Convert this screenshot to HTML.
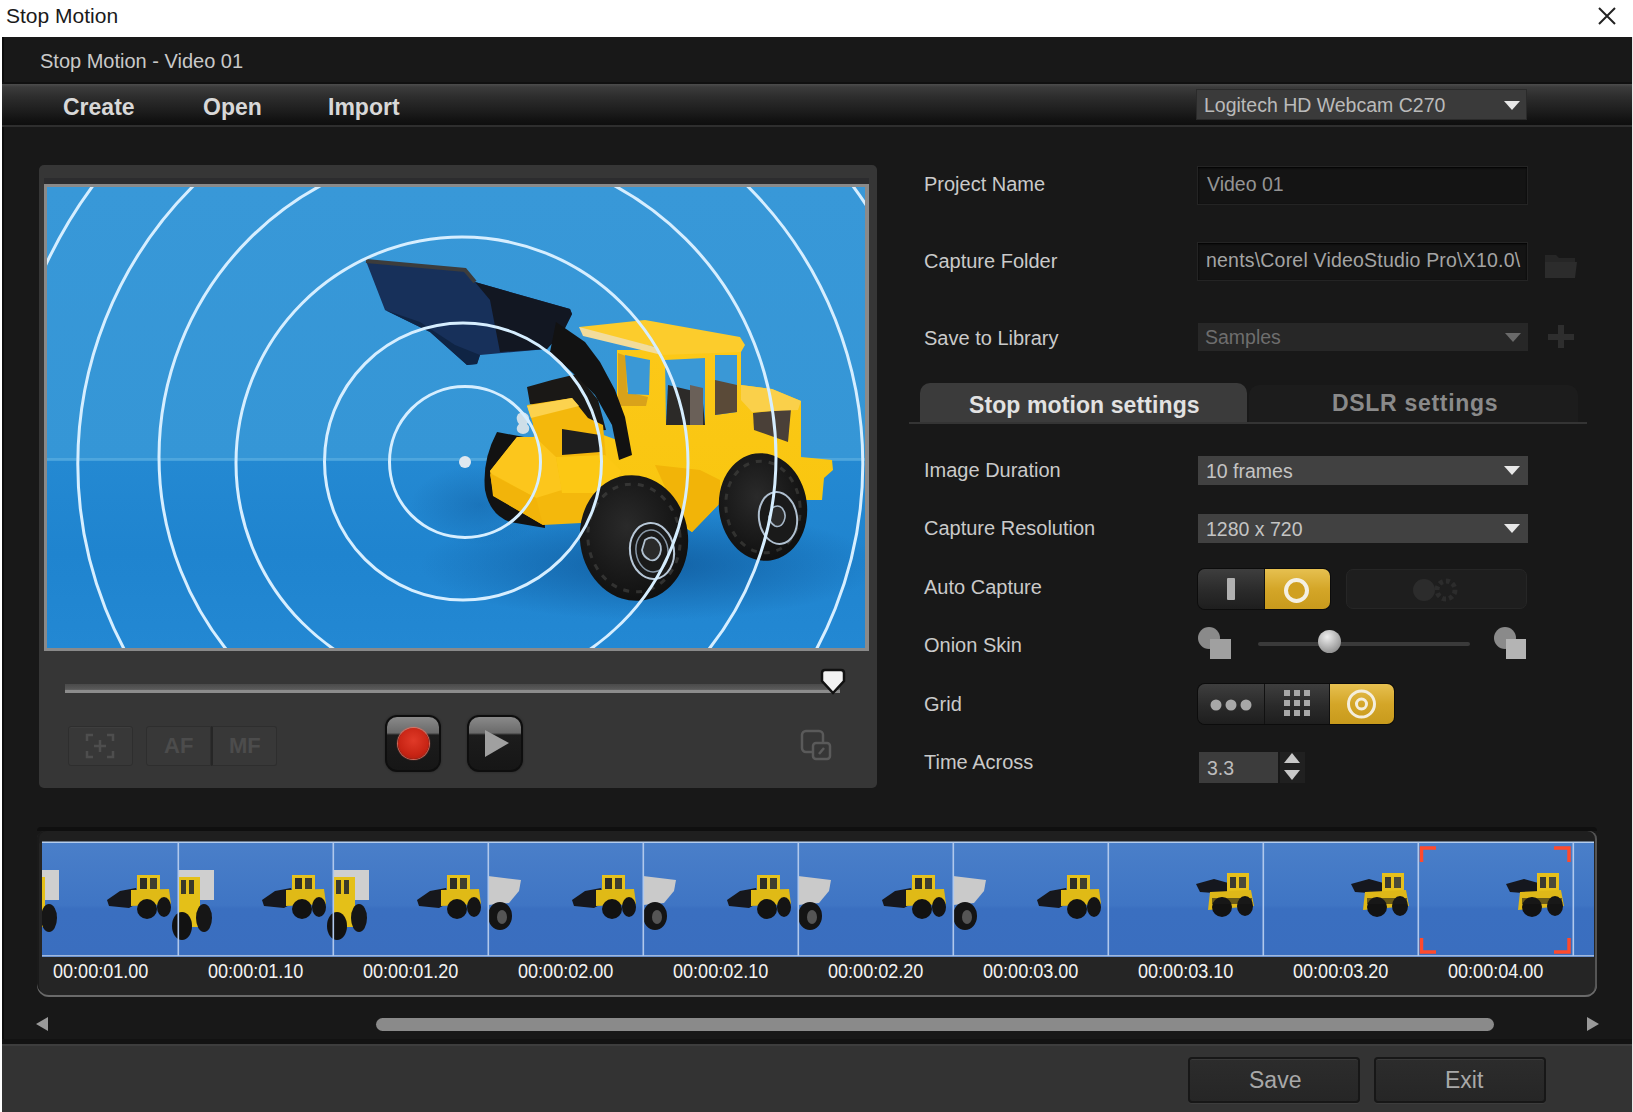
<!DOCTYPE html>
<html><head><meta charset="utf-8">
<style>
*{margin:0;padding:0;box-sizing:border-box}
html,body{width:1633px;height:1112px;overflow:hidden;background:#fff;font-family:"Liberation Sans",sans-serif}
.a{position:absolute}
.t{position:absolute;white-space:nowrap;line-height:1}
#win{left:2px;top:37px;width:1630px;height:1075px;background:#181818;border-left:2px solid #0c0c0c}
.lbl{position:absolute;left:924px;font-size:20px;color:#cacaca;white-space:nowrap;line-height:1}
.dd{position:absolute;left:1198px;width:330px;height:29px;background:#414141}
.dd .v{position:absolute;left:8px;top:6px;font-size:19.5px;color:#c4c4c4;white-space:nowrap;line-height:1}
.ts{position:absolute;top:960px;font-size:21px;color:#f2f2f2;white-space:nowrap;line-height:1;transform:scaleX(0.86);transform-origin:0 0}
.arr{position:absolute;width:0;height:0;border-left:8px solid transparent;border-right:8px solid transparent;border-top:9px solid #e8e8e8}
</style></head>
<body>
<!-- title bar -->
<div class="t" style="left:6px;top:5px;font-size:21px;color:#1a1a1a">Stop Motion</div>
<svg class="a" style="left:1596px;top:6px" width="22" height="20"><path d="M3 2 L19 18 M19 2 L3 18" stroke="#222" stroke-width="2"/></svg>


<div id="win" class="a"></div>
<div class="t" style="left:40px;top:51px;font-size:20px;color:#c9c9c9">Stop Motion - Video 01</div>
<!-- menu bar -->
<div class="a" style="left:2px;top:82px;width:1630px;height:2px;background:#101010"></div>
<div class="a" style="left:2px;top:84px;width:1630px;height:41px;background:linear-gradient(#4c4c4c 0,#3c3c3c 3px,#2e2e2e 12px,#1c1c1c 28px,#121212 36px,#0e0e0e 41px)"></div>
<div class="a" style="left:2px;top:125px;width:1630px;height:2px;background:#2e2e2e"></div>
<div class="t" style="left:63px;top:96px;font-size:23px;font-weight:700;color:#d8d8d8">Create</div>
<div class="t" style="left:203px;top:96px;font-size:23px;font-weight:700;color:#d8d8d8">Open</div>
<div class="t" style="left:328px;top:96px;font-size:23px;font-weight:700;color:#d8d8d8">Import</div>
<div class="a" style="left:1196px;top:89px;width:331px;height:31px;background:#3a3a3a;border:1px solid #2a2a2a"></div>
<div class="t" style="left:1204px;top:96px;font-size:19.5px;color:#bababa">Logitech HD Webcam C270</div>
<div class="arr" style="left:1504px;top:101px"></div>

<!-- preview panel -->
<div class="a" style="left:39px;top:165px;width:838px;height:623px;background:#363636;border-radius:5px"></div>
<div class="a" style="left:44px;top:178px;width:825px;height:6px;background:#2c2c2e"></div>
<div class="a" style="left:44px;top:184px;width:825px;height:467px;background:#8a8a8a"></div>
<svg class="a" style="left:47px;top:187px" width="818" height="461" viewBox="47 187 818 461">
<defs>
<linearGradient id="sky" x1="0" y1="0" x2="0" y2="1"><stop offset="0" stop-color="#3898d8"/><stop offset="1" stop-color="#3596d6"/></linearGradient>
<linearGradient id="gnd" x1="0" y1="0" x2="0" y2="1"><stop offset="0" stop-color="#2489d2"/><stop offset="0.5" stop-color="#1f84cf"/><stop offset="1" stop-color="#2388d3"/></linearGradient>
<radialGradient id="shadow" cx="0.5" cy="0.5" r="0.5"><stop offset="0" stop-color="#0a4a88" stop-opacity="0.6"/><stop offset="1" stop-color="#0a4a88" stop-opacity="0"/></radialGradient>
<linearGradient id="bodyY" x1="0" y1="0" x2="0" y2="1"><stop offset="0" stop-color="#fcc818"/><stop offset="1" stop-color="#f8c60e"/></linearGradient>
<radialGradient id="tire" cx="0.45" cy="0.4" r="0.6"><stop offset="0" stop-color="#2a2a2a"/><stop offset="1" stop-color="#101010"/></radialGradient>
</defs>
<rect x="47" y="187" width="818" height="275" fill="url(#sky)"/>
<rect x="47" y="460" width="818" height="188" fill="url(#gnd)"/>
<rect x="47" y="458" width="818" height="3" fill="#63b4e4" opacity="0.55"/>
<ellipse cx="650" cy="565" rx="230" ry="55" fill="url(#shadow)"/>
<ellipse cx="480" cy="505" rx="70" ry="40" fill="url(#shadow)" opacity="0.5"/>
<!-- rear-left tire behind counterweight -->
<path d="M497 432 Q482 460 485 490 Q490 515 510 522 L545 528 L540 440 Z" fill="#121212"/>
<!-- lower link -->
<polygon points="527,387 552,380 577,374 598,400 606,430 578,432 562,410 530,404" fill="#1a1816"/>
<!-- bucket -->
<polygon points="366,261 465,270 475,282 570,309 572,314 564,330 547,349 480,355 477,364 467,365 430,332 385,310" fill="#17305a"/>
<polygon points="475,282 570,309 572,314 564,330 547,349 500,352 490,300" fill="#121722"/>
<polyline points="366,261 465,270 475,282" stroke="#3c3c3c" stroke-width="4" fill="none"/>
<polygon points="385,310 430,332 467,365 477,364 480,355 455,345 420,322" fill="#0f2444"/>
<!-- cab body -->
<polygon points="617,350 741,350 741,385 772,389 801,401 801,457 832,460 833,470 824,478 822,500 790,500 740,500 720,503 692,532 640,500 600,470 590,430 617,440" fill="url(#bodyY)"/>
<polygon points="655,465 700,470 720,480 720,503 692,532 680,520" fill="#f2b408"/>
<!-- window 1 -->
<polygon points="618,353 626,356 627,392 648,397 646,406 618,406" fill="#d9a21a"/>
<polygon points="625,355 650,360 649,395 628,394" fill="#3a98d6"/>
<!-- window 2 -->
<polygon points="665,360 705,358 705,425 666,425" fill="#3a98d6"/>
<polygon points="668,385 702,393 705,425 666,425" fill="#2c2a28"/>
<polygon points="690,385 703,388 703,425 690,425" fill="#6a6058"/>
<!-- window 3 -->
<polygon points="715,355 737,355 737,412 715,415" fill="#3a98d6"/>
<polygon points="715,380 737,385 737,412 715,415" fill="#5a4a38"/>
<!-- grille -->
<polygon points="753,413 791,409 788,442 754,430" fill="#4a4038"/>
<!-- hood top -->
<polygon points="741,385 772,389 801,401 798,410 752,412 741,400" fill="#fad04a"/>
<!-- roof -->
<polygon points="579,327 645,320 740,337 745,345 741,352 662,355 655,347 585,332" fill="#fccc2c"/>
<polygon points="579,327 655,347 662,355 583,336" fill="#f2dc9c"/>
<!-- boom -->
<polygon points="556,322 585,342 600,362 615,390 625,417 632,455 619,460 612,425 595,395 575,375 550,352" fill="#121212"/>
<!-- front block -->
<polygon points="527,405 572,398 588,418 603,425 606,458 622,471 610,493 600,522 543,525 493,496 490,471 517,437 534,437 533,424" fill="#f4b80c"/>
<polygon points="527,406 572,398 579,406 531,418" fill="#fcd24e"/>
<polygon points="490,471 517,437 535,437 556,457 562,490 536,498 492,474" fill="#fcc61c"/>
<polygon points="490,474 536,498 543,525 494,496" fill="#f2b40a"/>
<polygon points="556,457 605,455 622,471 610,493 562,493" fill="#fcc814"/>
<polygon points="562,429 600,435 600,452 562,455" fill="#1e1e1e"/>
<path d="M518 414 q6 -4 10 1 q3 5 -1 9 q4 3 1 8 q-5 4 -10 0 q-3 -4 1 -8 q-4 -5 -1 -10 z" fill="#dfe6ea" opacity="0.9"/>
<!-- front tire -->
<ellipse cx="634" cy="538" rx="54" ry="63" transform="rotate(-8 634 538)" fill="url(#tire)"/>
<ellipse cx="634" cy="538" rx="46" ry="54" transform="rotate(-8 634 538)" fill="none" stroke="#4a4a48" stroke-width="3" stroke-dasharray="6 7" opacity="0.55"/>
<ellipse cx="652" cy="551" rx="22" ry="28" transform="rotate(-8 652 551)" fill="#1a1a1a" stroke="#b8c8d8" stroke-width="2"/>
<ellipse cx="652" cy="551" rx="16" ry="21" transform="rotate(-8 652 551)" fill="none" stroke="#8898a8" stroke-width="1.5"/>
<path d="M645 540 q7 -5 12 0 q6 6 3 14 q-4 8 -10 6 q-7 -3 -8 -10 z" fill="#2a2a2a" stroke="#b0c0d0" stroke-width="1.8"/>
<!-- rear tire -->
<ellipse cx="763" cy="507" rx="44" ry="54" transform="rotate(-8 763 507)" fill="url(#tire)"/>
<ellipse cx="763" cy="507" rx="37" ry="46" transform="rotate(-8 763 507)" fill="none" stroke="#484846" stroke-width="3" stroke-dasharray="6 7" opacity="0.55"/>

<ellipse cx="778" cy="518" rx="19" ry="26" transform="rotate(-8 778 518)" fill="#1a1a1a" stroke="#b0c0d0" stroke-width="2"/>
<path d="M772 508 q6 -4 10 0 q5 6 2 13 q-3 7 -9 5 q-5 -3 -6 -9 z" fill="#2a2a2a" stroke="#a8b8c8" stroke-width="1.6"/>
<!-- rings -->
<g fill="none" stroke="#d6eeff" stroke-width="3">
<circle cx="465" cy="462" r="75.5"/>
<circle cx="463" cy="461.5" r="138.5"/>
<circle cx="462" cy="463" r="226"/>
<circle cx="467.5" cy="457" r="308.5"/>
<circle cx="470.3" cy="464" r="392.5"/>
<circle cx="472.8" cy="466" r="472"/>
</g>
<circle cx="465" cy="462" r="6" fill="#dfe8f0"/>
</svg>



<!-- right panel -->
<div class="lbl" style="top:174px">Project Name</div>
<div class="lbl" style="top:251px">Capture Folder</div>
<div class="lbl" style="top:328px">Save to Library</div>
<div class="a" style="left:1197px;top:166px;width:331px;height:39px;background:#141414;border:1px solid #242424;box-shadow:inset 0 1px 2px #000"></div>
<div class="t" style="left:1207px;top:175px;font-size:19.5px;color:#949494">Video 01</div>
<div class="a" style="left:1197px;top:242px;width:331px;height:39px;background:#141414;border:1px solid #242424;box-shadow:inset 0 1px 2px #000"></div>
<div class="t" style="left:1206px;top:251px;font-size:19.5px;color:#a4a4a4;letter-spacing:0.2px">nents\Corel VideoStudio Pro\X10.0\</div>
<svg class="a" style="left:1543px;top:250px" width="36" height="32"><path d="M2 5 h11 l3 3 h16 v20 h-30 z" fill="#262626"/><path d="M2 12 h32 l-2 16 h-30 z" fill="#2c2c2c"/></svg>
<div class="a" style="left:1198px;top:323px;width:330px;height:28px;background:#272727"></div>
<div class="t" style="left:1205px;top:328px;font-size:19.5px;color:#6e6e6e">Samples</div>
<div class="arr" style="left:1505px;top:333px;border-top-color:#6a6a6a"></div>
<svg class="a" style="left:1547px;top:324px" width="28" height="25"><path d="M11 1 h6 v9 h10 v6 h-10 v8 h-6 v-8 h-10 v-6 h10 z" fill="#2e2e2e"/></svg>

<!-- tabs -->
<div class="a" style="left:920px;top:383px;width:327px;height:40px;background:#3b3b3b;border-radius:10px 10px 0 0"></div>
<div class="a" style="left:1249px;top:385px;width:329px;height:38px;background:#1c1c1c;border-radius:10px 10px 0 0"></div>
<div class="a" style="left:909px;top:422px;width:678px;height:2px;background:#343434"></div>
<div class="t" style="left:969px;top:394px;font-size:23px;font-weight:700;color:#e2e2e2;letter-spacing:0.1px">Stop motion settings</div>
<div class="t" style="left:1332px;top:392px;font-size:23px;font-weight:700;color:#8a8a8a;letter-spacing:0.7px">DSLR settings</div>

<div class="lbl" style="top:460px">Image Duration</div>
<div class="lbl" style="top:518px">Capture Resolution</div>
<div class="lbl" style="top:577px">Auto Capture</div>
<div class="lbl" style="top:635px">Onion Skin</div>
<div class="lbl" style="top:694px">Grid</div>
<div class="lbl" style="top:752px">Time Across</div>

<div class="dd" style="top:456px"><div class="v">10 frames</div><div class="arr" style="left:306px;top:10px"></div></div>
<div class="dd" style="top:514px"><div class="v">1280 x 720</div><div class="arr" style="left:306px;top:10px"></div></div>

<!-- auto capture -->
<div class="a" style="left:1198px;top:569px;width:132px;height:40px;border-radius:7px;overflow:hidden;box-shadow:0 0 0 1px #0c0c0c">
  <div class="a" style="left:0;top:0;width:66px;height:40px;background:linear-gradient(#3e3e3e,#2a2a2a 55%,#1e1e1e)"></div>
  <div class="a" style="left:66px;top:0;width:1px;height:40px;background:#111"></div>
  <div class="a" style="left:67px;top:0;width:65px;height:40px;background:linear-gradient(#e6c050,#d4a628 50%,#c89a1c)"></div>
  <div class="a" style="left:29px;top:9px;width:8px;height:22px;background:#b0b0b0;border-radius:1px"></div>
  <div class="a" style="left:86px;top:9px;width:25px;height:25px;border-radius:50%;border:4px solid #f4f0e4;background:#d0a020"></div>
</div>
<div class="a" style="left:1346px;top:569px;width:181px;height:40px;border-radius:7px;background:#1e1e1e;border:1px solid #262626"></div>
<svg class="a" style="left:1410px;top:576px" width="52" height="28"><circle cx="14" cy="14" r="11" fill="#2c2c2c"/><circle cx="36" cy="14" r="9" fill="none" stroke="#2c2c2c" stroke-width="5" stroke-dasharray="4 3"/></svg>

<!-- onion skin -->
<div class="a" style="left:1258px;top:642px;width:212px;height:4px;border-radius:2px;background:#3a3a3a"></div>
<div class="a" style="left:1318px;top:630px;width:23px;height:23px;border-radius:50%;background:radial-gradient(circle at 40% 30%,#eee,#9a9a9a 70%,#777)"></div>
<svg class="a" style="left:1196px;top:625px" width="40" height="38"><circle cx="13" cy="13" r="11" fill="#8a8a8a"/><rect x="14" y="14" width="21" height="20" fill="#a0a0a0"/></svg>
<svg class="a" style="left:1492px;top:625px" width="40" height="38"><circle cx="13" cy="13" r="11" fill="#8a8a8a"/><rect x="14" y="14" width="20" height="20" fill="#b4b4b4"/></svg>

<!-- grid -->
<div class="a" style="left:1198px;top:684px;width:196px;height:40px;border-radius:7px;overflow:hidden;box-shadow:0 0 0 1px #0c0c0c">
  <div class="a" style="left:0;top:0;width:66px;height:40px;background:linear-gradient(#3e3e3e,#2a2a2a 55%,#1e1e1e)"></div>
  <div class="a" style="left:66px;top:0;width:1px;height:40px;background:#111"></div>
  <div class="a" style="left:67px;top:0;width:64px;height:40px;background:linear-gradient(#3e3e3e,#2a2a2a 55%,#1e1e1e)"></div>
  <div class="a" style="left:131px;top:0;width:1px;height:40px;background:#111"></div>
  <div class="a" style="left:132px;top:0;width:64px;height:40px;background:linear-gradient(#e6c050,#d4a628 50%,#c89a1c)"></div>
  <svg class="a" style="left:0;top:0" width="196" height="40">
    <circle cx="18" cy="21" r="5.5" fill="#a8a8a8"/><circle cx="33" cy="21" r="5.5" fill="#a8a8a8"/><circle cx="48" cy="21" r="5.5" fill="#a8a8a8"/>
    <g fill="#a8a8a8"><rect x="86" y="6" width="6" height="6"/><rect x="96" y="6" width="6" height="6"/><rect x="106" y="6" width="6" height="6"/>
    <rect x="86" y="16" width="6" height="6"/><rect x="96" y="16" width="6" height="6"/><rect x="106" y="16" width="6" height="6"/>
    <rect x="86" y="26" width="6" height="6"/><rect x="96" y="26" width="6" height="6"/><rect x="106" y="26" width="6" height="6"/></g>
    <circle cx="163.5" cy="20" r="13" fill="none" stroke="#f4eedc" stroke-width="3"/><circle cx="163.5" cy="20" r="5" fill="none" stroke="#f4eedc" stroke-width="3"/>
  </svg>
</div>

<!-- time across -->
<div class="a" style="left:1199px;top:752px;width:79px;height:31px;background:#3c3c3c"></div>
<div class="t" style="left:1207px;top:759px;font-size:19.5px;color:#bcbcbc">3.3</div>
<div class="a" style="left:1280px;top:752px;width:25px;height:31px;background:#202020"></div>
<div class="a" style="left:1284px;top:753px;width:0;height:0;border-left:8px solid transparent;border-right:8px solid transparent;border-bottom:10px solid #c8c8c8"></div>
<div class="a" style="left:1284px;top:770px;width:0;height:0;border-left:8px solid transparent;border-right:8px solid transparent;border-top:10px solid #c8c8c8"></div>

<!-- preview controls -->
<div class="a" style="left:65px;top:684px;width:775px;height:9px;background:linear-gradient(#4a4a4a,#5a5a5a 60%,#8c8c8c 70%,#8c8c8c)"></div>
<svg class="a" style="left:818px;top:668px" width="30" height="28"><path d="M4 5 Q4 2 7 2 H23 Q26 2 26 5 V13 L15 25 L4 13 Z" fill="#f2f2f2" stroke="#111" stroke-width="2.5"/></svg>
<div class="a" style="left:68px;top:726px;width:65px;height:40px;background:#383838;border:1px solid #2e2e2e;border-radius:3px;box-shadow:inset 0 1px 0 #3e3e3e"></div>
<svg class="a" style="left:84px;top:731px" width="32" height="30"><g fill="none" stroke="#4e4e4e" stroke-width="2.5"><path d="M3 10 V4 H9 M23 4 H29 V10 M29 20 V26 H23 M9 26 H3 V20"/><path d="M16 9 V21 M10 15 H22"/></g></svg>
<div class="a" style="left:146px;top:726px;width:65px;height:40px;background:#383838;border:1px solid #2e2e2e;border-radius:3px 0 0 3px"></div>
<div class="a" style="left:211px;top:726px;width:66px;height:40px;background:#383838;border:1px solid #2e2e2e;border-left:2px solid #262626;border-radius:0 3px 3px 0"></div>
<div class="t" style="left:164px;top:735px;font-size:22px;font-weight:700;color:#4c4c4c">AF</div>
<div class="t" style="left:229px;top:735px;font-size:22px;font-weight:700;color:#4c4c4c">MF</div>
<!-- record -->
<div class="a" style="left:385px;top:715px;width:56px;height:57px;border-radius:12px;background:linear-gradient(#8a8a8a 0,#6a6a6a 30%,#1c1c1c 34%,#161616 100%);border:2px solid #0e0e0e;box-shadow:0 0 2px #222"></div>
<div class="a" style="left:398px;top:728px;width:31px;height:31px;border-radius:50%;background:radial-gradient(circle at 50% 40%,#e03a28,#c82414 60%,#a01a0e);box-shadow:0 0 1px 1px #e67060"></div>
<!-- play -->
<div class="a" style="left:467px;top:715px;width:56px;height:57px;border-radius:12px;background:linear-gradient(#8a8a8a 0,#6a6a6a 30%,#1c1c1c 34%,#161616 100%);border:2px solid #0e0e0e;box-shadow:0 0 2px #222"></div>
<svg class="a" style="left:482px;top:728px" width="30" height="32"><path d="M3 2 L27 15 L3 29 Z" fill="#a0a0a0"/></svg>
<!-- copy icon -->
<svg class="a" style="left:798px;top:727px" width="36" height="36"><g fill="none" stroke="#5a5a5a" stroke-width="2.5"><rect x="4" y="4" width="21" height="21" rx="4"/><rect x="15" y="16" width="17" height="16" rx="3" fill="#363636"/><path d="M21 27 L26 21"/></g></svg>

<!-- filmstrip -->
<div class="a" style="left:37px;top:827px;width:1560px;height:4px;background:#0f0f0f;border-radius:6px 6px 0 0"></div>
<div class="a" style="left:37px;top:831px;width:1560px;height:166px;background:#252525;border-radius:8px 8px 12px 12px;box-shadow:inset 0 -2px 0 #6a6a6a, inset -2px 0 0 #555, inset 2px 0 0 #1a1a1a, inset 0 10px 0 #1f1f1f"></div>
<svg class="a" style="left:42px;top:841px" width="1552" height="116" viewBox="42 841 1552 116">
<defs>
<linearGradient id="tb" x1="0" y1="0" x2="0" y2="1"><stop offset="0" stop-color="#4a7fc9"/><stop offset="0.55" stop-color="#3f75c4"/><stop offset="0.58" stop-color="#3a6fc0"/><stop offset="1" stop-color="#3a6ebf"/></linearGradient>
<g id="ldA">
 <polygon points="84,58 97,49 113,46 117,60 106,66 86,64" fill="#16171c"/>
 <rect x="114" y="33" width="23" height="17" fill="#e6c21c"/>
 <rect x="117" y="36" width="7" height="11" fill="#2e2e26"/><rect x="127" y="36" width="7" height="11" fill="#3e3e30"/>
 <polygon points="108,48 146,47 148,62 108,64" fill="#e0ba16"/>
 <ellipse cx="124" cy="67" rx="10" ry="10" fill="#121212"/>
 <ellipse cx="141" cy="65" rx="7" ry="10" fill="#141414"/>
</g>
<g id="ldB">
 <polygon points="88,42 106,37 124,42 120,52 92,50" fill="#15171e"/>
 <rect x="119" y="31" width="22" height="20" fill="#e6c01c"/>
 <rect x="122" y="35" width="6" height="11" fill="#3a3a30"/><rect x="131" y="35" width="7" height="11" fill="#4a4a3a"/>
 <polygon points="102,50 143,48 146,64 100,68" fill="#dfb818"/>
 <ellipse cx="114" cy="65" rx="10" ry="10" fill="#121212"/>
 <ellipse cx="137" cy="64" rx="8" ry="10" fill="#141414"/>
 <rect x="104" y="56" width="40" height="6" fill="#1a1a1a" opacity="0.6"/>
</g>
<g id="dumpY">
 <rect x="0" y="28" width="36" height="30" fill="#cfcfcf"/>
 <rect x="0" y="35" width="22" height="50" fill="#e4c018"/>
 <rect x="3" y="38" width="5" height="14" fill="#3a3a2a"/><rect x="11" y="38" width="5" height="14" fill="#3a3a2a"/>
 <ellipse cx="4" cy="84" rx="10" ry="14" fill="#121212"/>
 <ellipse cx="26" cy="76" rx="8" ry="14" fill="#161616"/>
</g>
<g id="dumpG">
 <polygon points="0,34 33,38 31,49 21,61 0,63" fill="#cacaca"/>
 <ellipse cx="12" cy="74" rx="12" ry="14" fill="#141414"/>
 <ellipse cx="14" cy="75" rx="5" ry="7" fill="#555"/>
</g>
<clipPath id="fc"><rect x="42" y="841" width="1552" height="116"/></clipPath>
</defs>
<g clip-path="url(#fc)">
<g transform="translate(23,842)"><rect x="0" y="0" width="155" height="115" fill="url(#tb)"/>
<use href="#dumpY"/>
<use href="#ldA"/>
</g>
<g transform="translate(178,842)"><rect x="0" y="0" width="155" height="115" fill="url(#tb)"/>
<use href="#dumpY"/>
<use href="#ldA"/>
</g>
<g transform="translate(333,842)"><rect x="0" y="0" width="155" height="115" fill="url(#tb)"/>
<use href="#dumpY"/>
<use href="#ldA"/>
</g>
<g transform="translate(488,842)"><rect x="0" y="0" width="155" height="115" fill="url(#tb)"/>
<use href="#dumpG"/>
<use href="#ldA"/>
</g>
<g transform="translate(643,842)"><rect x="0" y="0" width="155" height="115" fill="url(#tb)"/>
<use href="#dumpG"/>
<use href="#ldA"/>
</g>
<g transform="translate(798,842)"><rect x="0" y="0" width="155" height="115" fill="url(#tb)"/>
<use href="#dumpG"/>
<use href="#ldA"/>
</g>
<g transform="translate(953,842)"><rect x="0" y="0" width="155" height="115" fill="url(#tb)"/>
<use href="#dumpG"/>
<use href="#ldA"/>
</g>
<g transform="translate(1108,842)"><rect x="0" y="0" width="155" height="115" fill="url(#tb)"/>
<use href="#ldB"/>
</g>
<g transform="translate(1263,842)"><rect x="0" y="0" width="155" height="115" fill="url(#tb)"/>
<use href="#ldB"/>
</g>
<g transform="translate(1418,842)"><rect x="0" y="0" width="155" height="115" fill="url(#tb)"/>
<use href="#ldB"/>
</g>
<g transform="translate(1573,842)"><rect x="0" y="0" width="155" height="115" fill="url(#tb)"/>
</g>
</g>
<rect x="42" y="841.5" width="1552" height="1.5" fill="#b4cdee"/>
<rect x="42" y="955" width="1552" height="1.5" fill="#9fb8de"/>
<rect x="177.5" y="842" width="1.6" height="114" fill="#b0c8ec"/>
<rect x="332.5" y="842" width="1.6" height="114" fill="#b0c8ec"/>
<rect x="487.5" y="842" width="1.6" height="114" fill="#b0c8ec"/>
<rect x="642.5" y="842" width="1.6" height="114" fill="#b0c8ec"/>
<rect x="797.5" y="842" width="1.6" height="114" fill="#b0c8ec"/>
<rect x="952.5" y="842" width="1.6" height="114" fill="#b0c8ec"/>
<rect x="1107.5" y="842" width="1.6" height="114" fill="#b0c8ec"/>
<rect x="1262.5" y="842" width="1.6" height="114" fill="#b0c8ec"/>
<rect x="1417.5" y="842" width="1.6" height="114" fill="#b0c8ec"/>
<rect x="1572.5" y="842" width="1.6" height="114" fill="#b0c8ec"/>
<g fill="none" stroke="#ff4a2c" stroke-width="3.5"><path d="M1421.5 862 V848 H1436"/><path d="M1554 848 H1569 V862"/><path d="M1569 938 V952 H1554"/><path d="M1436 952 H1421.5 V938"/></g>
</svg>
<div class="ts" style="left:53px">00:00:01.00</div>
<div class="ts" style="left:208px">00:00:01.10</div>
<div class="ts" style="left:363px">00:00:01.20</div>
<div class="ts" style="left:518px">00:00:02.00</div>
<div class="ts" style="left:673px">00:00:02.10</div>
<div class="ts" style="left:828px">00:00:02.20</div>
<div class="ts" style="left:983px">00:00:03.00</div>
<div class="ts" style="left:1138px">00:00:03.10</div>
<div class="ts" style="left:1293px">00:00:03.20</div>
<div class="ts" style="left:1448px">00:00:04.00</div>
<!-- scrollbar -->
<div class="a" style="left:376px;top:1018px;width:1118px;height:13px;border-radius:7px;background:#8a8a8a"></div>
<div class="a" style="left:36px;top:1017px;width:0;height:0;border-top:7px solid transparent;border-bottom:7px solid transparent;border-right:12px solid #9a9a9a"></div>
<div class="a" style="left:1587px;top:1017px;width:0;height:0;border-top:7px solid transparent;border-bottom:7px solid transparent;border-left:12px solid #9a9a9a"></div>


<!-- bottom -->
<div class="a" style="left:2px;top:1039px;width:1630px;height:5px;background:#121212"></div>
<div class="a" style="left:2px;top:1044px;width:1630px;height:68px;background:#333;border-top:2px solid #3d3d3d"></div>
<div class="a" style="left:1188px;top:1057px;width:172px;height:46px;background:linear-gradient(#2c2c2c,#262626);border:2px solid #171717;border-radius:4px;box-shadow:inset 0 1px 0 #3a3a3a,0 1px 0 #3c3c3c"></div>
<div class="a" style="left:1374px;top:1057px;width:172px;height:46px;background:linear-gradient(#2c2c2c,#262626);border:2px solid #171717;border-radius:4px;box-shadow:inset 0 1px 0 #3a3a3a,0 1px 0 #3c3c3c"></div>
<div class="t" style="left:1249px;top:1069px;font-size:23px;color:#a8a8a8">Save</div>
<div class="t" style="left:1445px;top:1069px;font-size:23px;color:#a8a8a8">Exit</div>
<div class="a" style="left:1632px;top:37px;width:1px;height:1075px;background:#e8e8e8"></div>
</body></html>
